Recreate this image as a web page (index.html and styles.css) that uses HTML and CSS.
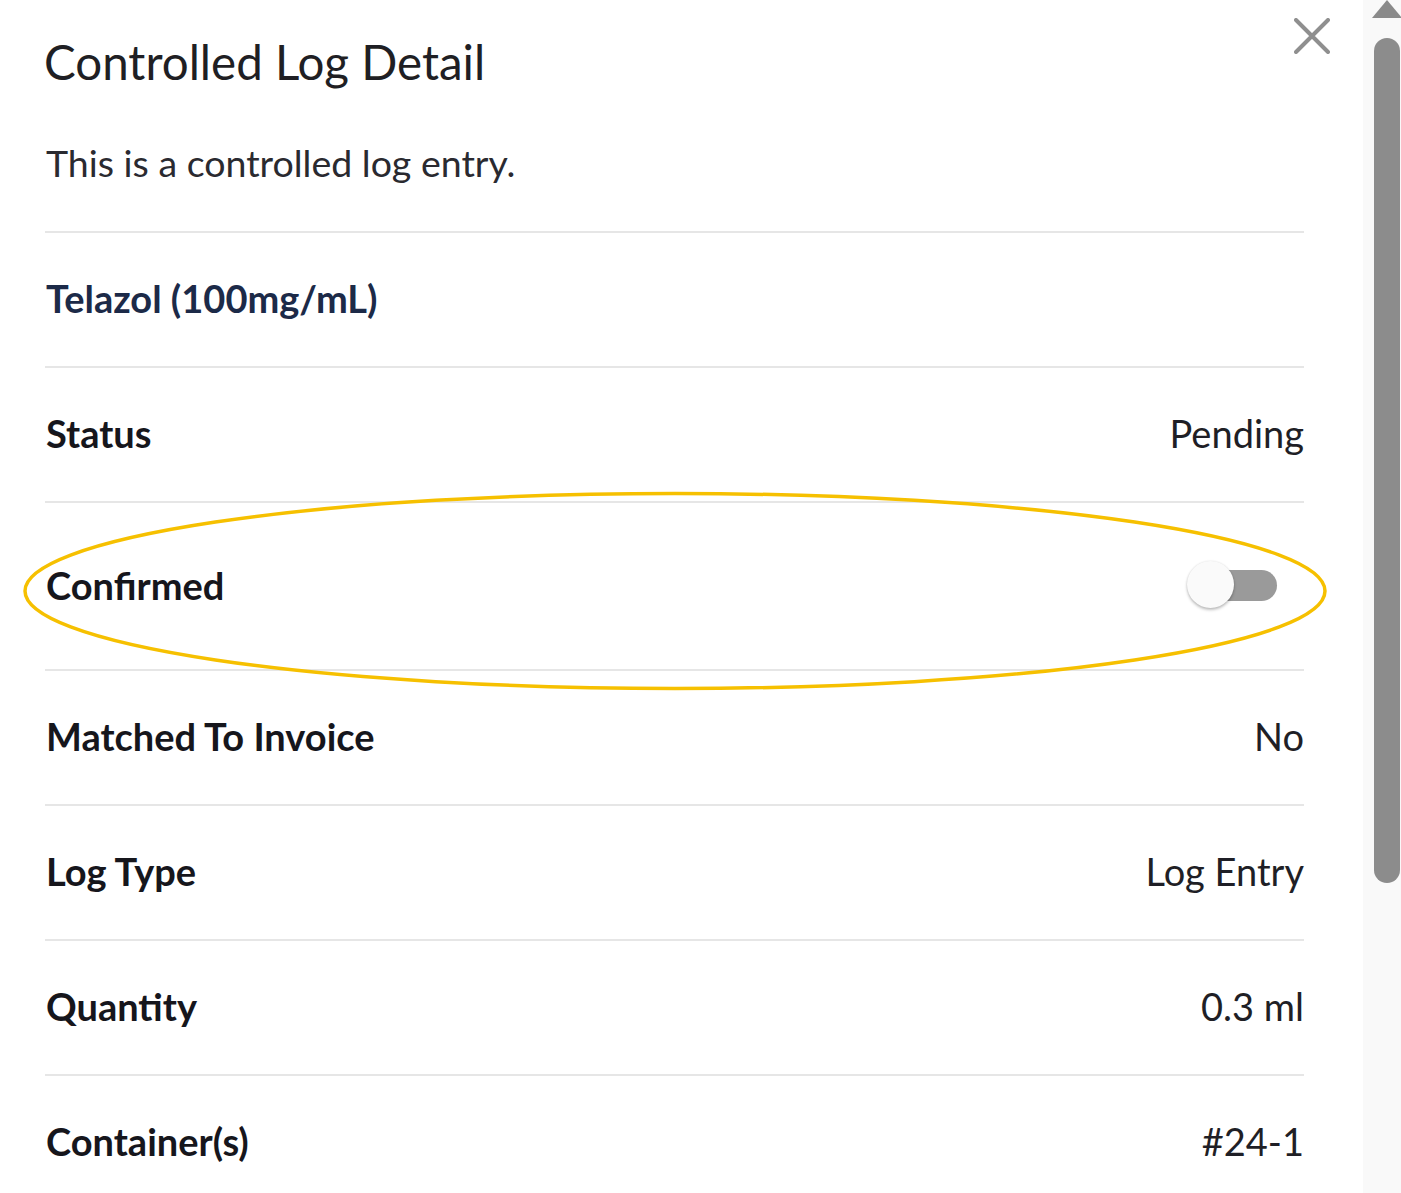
FILE: index.html
```html
<!DOCTYPE html>
<html lang="en">
<head>
<meta charset="utf-8">
<title>Controlled Log Detail</title>
<link rel="stylesheet" href="styles.css">
</head>
<body>
<div class="page">
  <main class="panel">
    <header class="head">
      <h1 class="title">Controlled Log Detail</h1>
      <button class="close" aria-label="Close">
        <svg viewBox="0 0 36 36" width="36" height="36"><path d="M2 2 L34 34 M34 2 L2 34" stroke="#8f8f8f" stroke-width="4" stroke-linecap="round" fill="none"/></svg>
      </button>
    </header>
    <p class="intro">This is a controlled log entry.</p>
    <div class="list">
      <div class="row"><span class="drug">Telazol (100mg/mL)</span></div>
      <div class="row"><span class="label">Status</span><span class="value">Pending</span></div>
      <div class="row tall">
        <span class="label">Confirmed</span>
        <span class="toggle"><span class="track"></span><span class="thumb"></span></span>
        <svg class="mark" viewBox="0 0 1306 200" preserveAspectRatio="none"><ellipse cx="653" cy="100" rx="650" ry="97.5" fill="none" stroke="#f6c000" stroke-width="3.5"/></svg>
      </div>
      <div class="row"><span class="label">Matched To Invoice</span><span class="value">No</span></div>
      <div class="row"><span class="label">Log Type</span><span class="value">Log Entry</span></div>
      <div class="row"><span class="label">Quantity</span><span class="value">0.3 ml</span></div>
      <div class="row"><span class="label">Container(s)</span><span class="value">#24-1</span></div>
    </div>
  </main>
  <div class="scrollbar">
    <span class="arrow"></span>
    <span class="bar"></span>
  </div>
</div>
</body>
</html>
```
FILE: styles.css
```css
html, body {
  margin: 0;
  padding: 0;
  background: #ffffff;
  height: 100%;
  overflow: hidden;
}
body {
  font-family: Lato, "Open Sans", Arial, sans-serif;
  color: #222;
}
.page {
  display: flex;
  height: 1193px;
}
.panel {
  flex: 1;
  position: relative;
  padding: 0 59px 0 45px;
  overflow: hidden;
}
.head {
  display: flex;
  align-items: flex-start;
}
.title {
  margin: 0 0 0 -1px;
  padding-top: 33px;
  font-size: 47.5px;
  line-height: 58px;
  font-weight: 400;
  color: #1f1f24;
}
.close {
  position: absolute;
  top: 17px;
  right: 32px;
  width: 38px;
  height: 38px;
  padding: 1px;
  border: 0;
  background: transparent;
}
.close svg { display: block; }
.intro {
  margin: 50px 0 0 1px;
  font-size: 37.5px;
  line-height: 44px;
  color: #2a2a30;
}
.list {
  margin-top: 46px;
  border-top: 2px solid #e6e6e6;
}
.row {
  position: relative;
  display: flex;
  align-items: center;
  justify-content: space-between;
  box-sizing: border-box;
  height: 135px;
  padding: 0 0 4px 1px;
  border-bottom: 2px solid #e6e6e6;
}
.row.tall { height: 168px; padding-bottom: 2px; }
.drug {
  font-size: 38px;
  font-weight: 700;
  color: #1c2a48;
}
.label {
  font-size: 38px;
  font-weight: 700;
  color: #16161c;
}
.value {
  font-size: 38px;
  color: #1f1f26;
}
.toggle {
  position: relative;
  width: 90px;
  height: 48px;
  margin-right: 27px;
  display: flex;
  align-items: center;
  justify-content: flex-end;
}
.track {
  width: 86px;
  height: 31px;
  border-radius: 16px;
  background: #9a9a9a;
}
.thumb {
  position: absolute;
  left: 0;
  top: 0;
  width: 47px;
  height: 47px;
  border-radius: 50%;
  background: #fafafa;
  box-shadow: 0 2px 3px rgba(0,0,0,0.25), 0 0 2px rgba(0,0,0,0.1);
}
.mark {
  position: absolute;
  left: -23px;
  top: -12px;
  width: 1306px;
  height: 200px;
  pointer-events: none;
}
.scrollbar {
  width: 38px;
  background: #f9f9f9;
  position: relative;
  display: flex;
  flex-direction: column;
  align-items: center;
}
.arrow {
  margin: 0 0 0 10px;
  width: 0;
  height: 0;
  border-left: 15px solid transparent;
  border-right: 15px solid transparent;
  border-bottom: 18px solid #8a8a8a;
}
.bar {
  margin: 20px 0 0 10px;
  width: 26px;
  height: 845px;
  border-radius: 13px;
  background: #8c8c8c;
}
```
